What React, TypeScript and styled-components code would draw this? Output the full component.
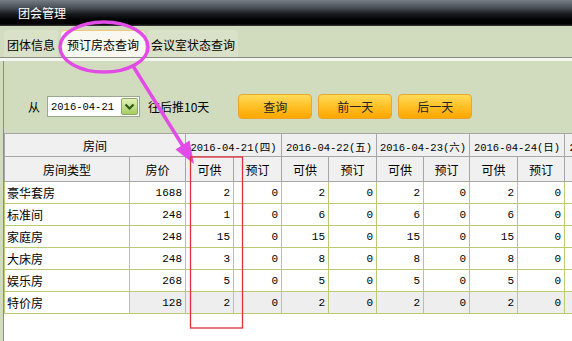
import React from 'react';
import styled, { createGlobalStyle } from 'styled-components';

const GlobalStyle = createGlobalStyle`
  html, body {
    margin: 0;
    padding: 0;
    background: #fff;
  }
  body {
    font-family: "Noto Sans CJK SC", "Noto Sans", sans-serif;
    font-size: 12px;
    color: #000;
  }
`;

const Window = styled.div`
  position: relative;
  width: 572px;
  height: 341px;
  overflow: hidden;
  display: flex;
  flex-direction: column;
  background: #d1dcbe;
`;

const TitleBar = styled.div`
  flex: none;
  height: 26px;
  box-sizing: border-box;
  padding: 0 0 2px 18px;
  display: flex;
  align-items: center;
  color: #fff;
  font-size: 12px;
  background: linear-gradient(#767c84 0%, #4c525a 28%, #16191d 55%, #020303 75%, #000 92%, #3a3d3a 100%);
`;

const TabBar = styled.div`
  flex: none;
  height: 32px;
  box-sizing: border-box;
  padding-left: 4px;
  display: flex;
  align-items: flex-end;
  border-bottom: 1px solid #8a8c84;
`;

const Tab = styled.div<{ active?: boolean }>`
  height: 27px;
  line-height: 27px;
  box-sizing: border-box;
  padding: 0 ${p => (p.active ? 6 : 3)}px;
  margin: 0 ${p => (p.active ? 3 : 0)}px;
  border-radius: 4px 4px 0 0;
  background: ${p => (p.active ? '#f8f8f0' : '#d9e1c9')};
  border-top: 1px solid ${p => (p.active ? '#f0c878' : '#d9e1c9')};
  white-space: nowrap;
`;

const Divider = styled.div`
  flex: none;
  height: 3px;
  background: #f4f7ee;
`;

const Panel = styled.div`
  flex: 1;
  margin-left: 3px;
  border-left: 1px solid #8c8c8c;
  display: flex;
  flex-direction: column;
  min-height: 0;
`;

const QueryRow = styled.div`
  flex: none;
  margin-top: 33px;
  height: 25px;
  padding-left: 24px;
  display: flex;
  align-items: center;
`;

const DateBox = styled.div`
  margin-left: 7px;
  width: 93px;
  height: 21px;
  box-sizing: border-box;
  border: 1px solid #9aa890;
  background: #fff;
  display: flex;
  align-items: center;
  justify-content: space-between;
  padding: 0 1px 0 3px;
`;

const Mono = styled.span`
  font-family: "Liberation Mono", "DejaVu Sans Mono", "Noto Sans CJK SC", monospace;
  font-size: 10.5px;
`;

const DropButton = styled.div`
  width: 17px;
  height: 17px;
  box-sizing: border-box;
  border: 1px solid #8aa862;
  border-radius: 2px;
  background: linear-gradient(#e2f2b8, #a6cc62);
  display: flex;
  align-items: center;
  justify-content: center;
`;

const Hint = styled.span`
  margin-left: 8px;
`;

const OrangeButton = styled.button<{ first?: boolean }>`
  margin-left: ${p => (p.first ? 29 : 6)}px;
  width: 74px;
  height: 25px;
  box-sizing: border-box;
  border: 1px solid #eaa52a;
  border-radius: 4px;
  background: linear-gradient(#ffdc5a 0%, #ffc22a 45%, #ffa600 100%);
  font-family: inherit;
  font-size: 12px;
  color: #222;
  padding: 0;
`;

const TableWrap = styled.div`
  flex: 1;
  margin-top: 14px;
  background: #fff;
  overflow: hidden;
`;

const Grid = styled.table`
  border-collapse: collapse;
  table-layout: fixed;
  width: 654px;
`;

const HeadCell = styled.th`
  height: 22px;
  padding: 0;
  font-weight: normal;
  text-align: center;
  background: #f0f0f0;
  border: 1px solid #a6a6a6;
  white-space: nowrap;
  overflow: hidden;
`;

const BodyRow = styled.tr`
  height: 22px;
`;

const Cell = styled.td<{ num?: boolean; shaded?: boolean }>`
  padding: 0 ${p => (p.num ? '3px 0 0' : '0 0 2px')};
  text-align: ${p => (p.num ? 'right' : 'left')};
  border: 1px solid #bac973;
  background: ${p => (p.shaded ? '#eeeeee' : '#fff')};
  white-space: nowrap;
  overflow: hidden;
  font-family: ${p =>
    p.num
      ? '"Liberation Mono", "DejaVu Sans Mono", monospace'
      : '"Noto Sans CJK SC", sans-serif'};
  font-size: ${p => (p.num ? '11px' : '12px')};
`;

const Overlay = styled.svg`
  position: absolute;
  left: 0;
  top: 0;
  pointer-events: none;
`;

const widths = [125, 56, 48, 48, 47, 48, 47, 46, 48, 47, 48, 48];
const dates = ['2016-04-21(四)', '2016-04-22(五)', '2016-04-23(六)', '2016-04-24(日)', '2016-04-25(一)'];

const rooms = [
  { name: '豪华套房', price: 1688, avail: [2, 2, 2, 2, 2] },
  { name: '标准间', price: 248, avail: [1, 6, 6, 6, 6] },
  { name: '家庭房', price: 248, avail: [15, 15, 15, 15, 15] },
  { name: '大床房', price: 248, avail: [3, 8, 8, 8, 8] },
  { name: '娱乐房', price: 268, avail: [5, 5, 5, 5, 5] },
  { name: '特价房', price: 128, avail: [2, 2, 2, 2, 2] },
];

const App: React.FC = () => {
  return (
    <>
      <GlobalStyle />
      <Window>
        <TitleBar>团会管理</TitleBar>
        <TabBar>
          <Tab>团体信息</Tab>
          <Tab active>预订房态查询</Tab>
          <Tab>会议室状态查询</Tab>
        </TabBar>
        <Divider />
        <Panel>
          <QueryRow>
            <span>从</span>
            <DateBox>
              <Mono>2016-04-21</Mono>
              <DropButton>
                <svg width="11" height="8" viewBox="0 0 11 8">
                  <polyline points="1.5,1.5 5.5,5.5 9.5,1.5" fill="none" stroke="#2f5a12" strokeWidth="2.2" />
                </svg>
              </DropButton>
            </DateBox>
            <Hint>往后推10天</Hint>
            <OrangeButton first>查询</OrangeButton>
            <OrangeButton>前一天</OrangeButton>
            <OrangeButton>后一天</OrangeButton>
          </QueryRow>
          <TableWrap>
            <Grid>
              <colgroup>
                {widths.map((w, i) => (
                  <col key={i} style={{ width: w }} />
                ))}
              </colgroup>
              <thead>
                <tr>
                  <HeadCell colSpan={2}>房间</HeadCell>
                  {dates.map(d => (
                    <HeadCell key={d} colSpan={2}>
                      <Mono>{d}</Mono>
                    </HeadCell>
                  ))}
                </tr>
                <tr style={{ height: 25 }}>
                  <HeadCell>房间类型</HeadCell>
                  <HeadCell>房价</HeadCell>
                  {dates.map(d => (
                    <React.Fragment key={d}>
                      <HeadCell>可供</HeadCell>
                      <HeadCell>预订</HeadCell>
                    </React.Fragment>
                  ))}
                </tr>
              </thead>
              <tbody>
                {rooms.map((r, ri) => {
                  const last = ri === rooms.length - 1;
                  return (
                    <BodyRow key={r.name}>
                      <Cell>{r.name}</Cell>
                      <Cell num shaded={last}>{r.price}</Cell>
                      {r.avail.map((a, i) => (
                        <React.Fragment key={i}>
                          <Cell num shaded={last}>{a}</Cell>
                          <Cell num shaded={last}>0</Cell>
                        </React.Fragment>
                      ))}
                    </BodyRow>
                  );
                })}
              </tbody>
            </Grid>
          </TableWrap>
        </Panel>
        <Overlay width="572" height="341" viewBox="0 0 572 341">
          <ellipse cx="104" cy="47" rx="44" ry="25" fill="none" stroke="#e24ce6" strokeWidth="3.5" />
          <line x1="133" y1="66" x2="186" y2="151" stroke="#e24ce6" strokeWidth="3.5" />
          <polygon points="194,164 175.5,149.5 189.5,140.5" fill="#e24ce6" />
          <rect x="190.5" y="157" width="52" height="171" fill="none" stroke="#e0303c" strokeWidth="1.3" />
        </Overlay>
      </Window>
    </>
  );
};

export default App;
